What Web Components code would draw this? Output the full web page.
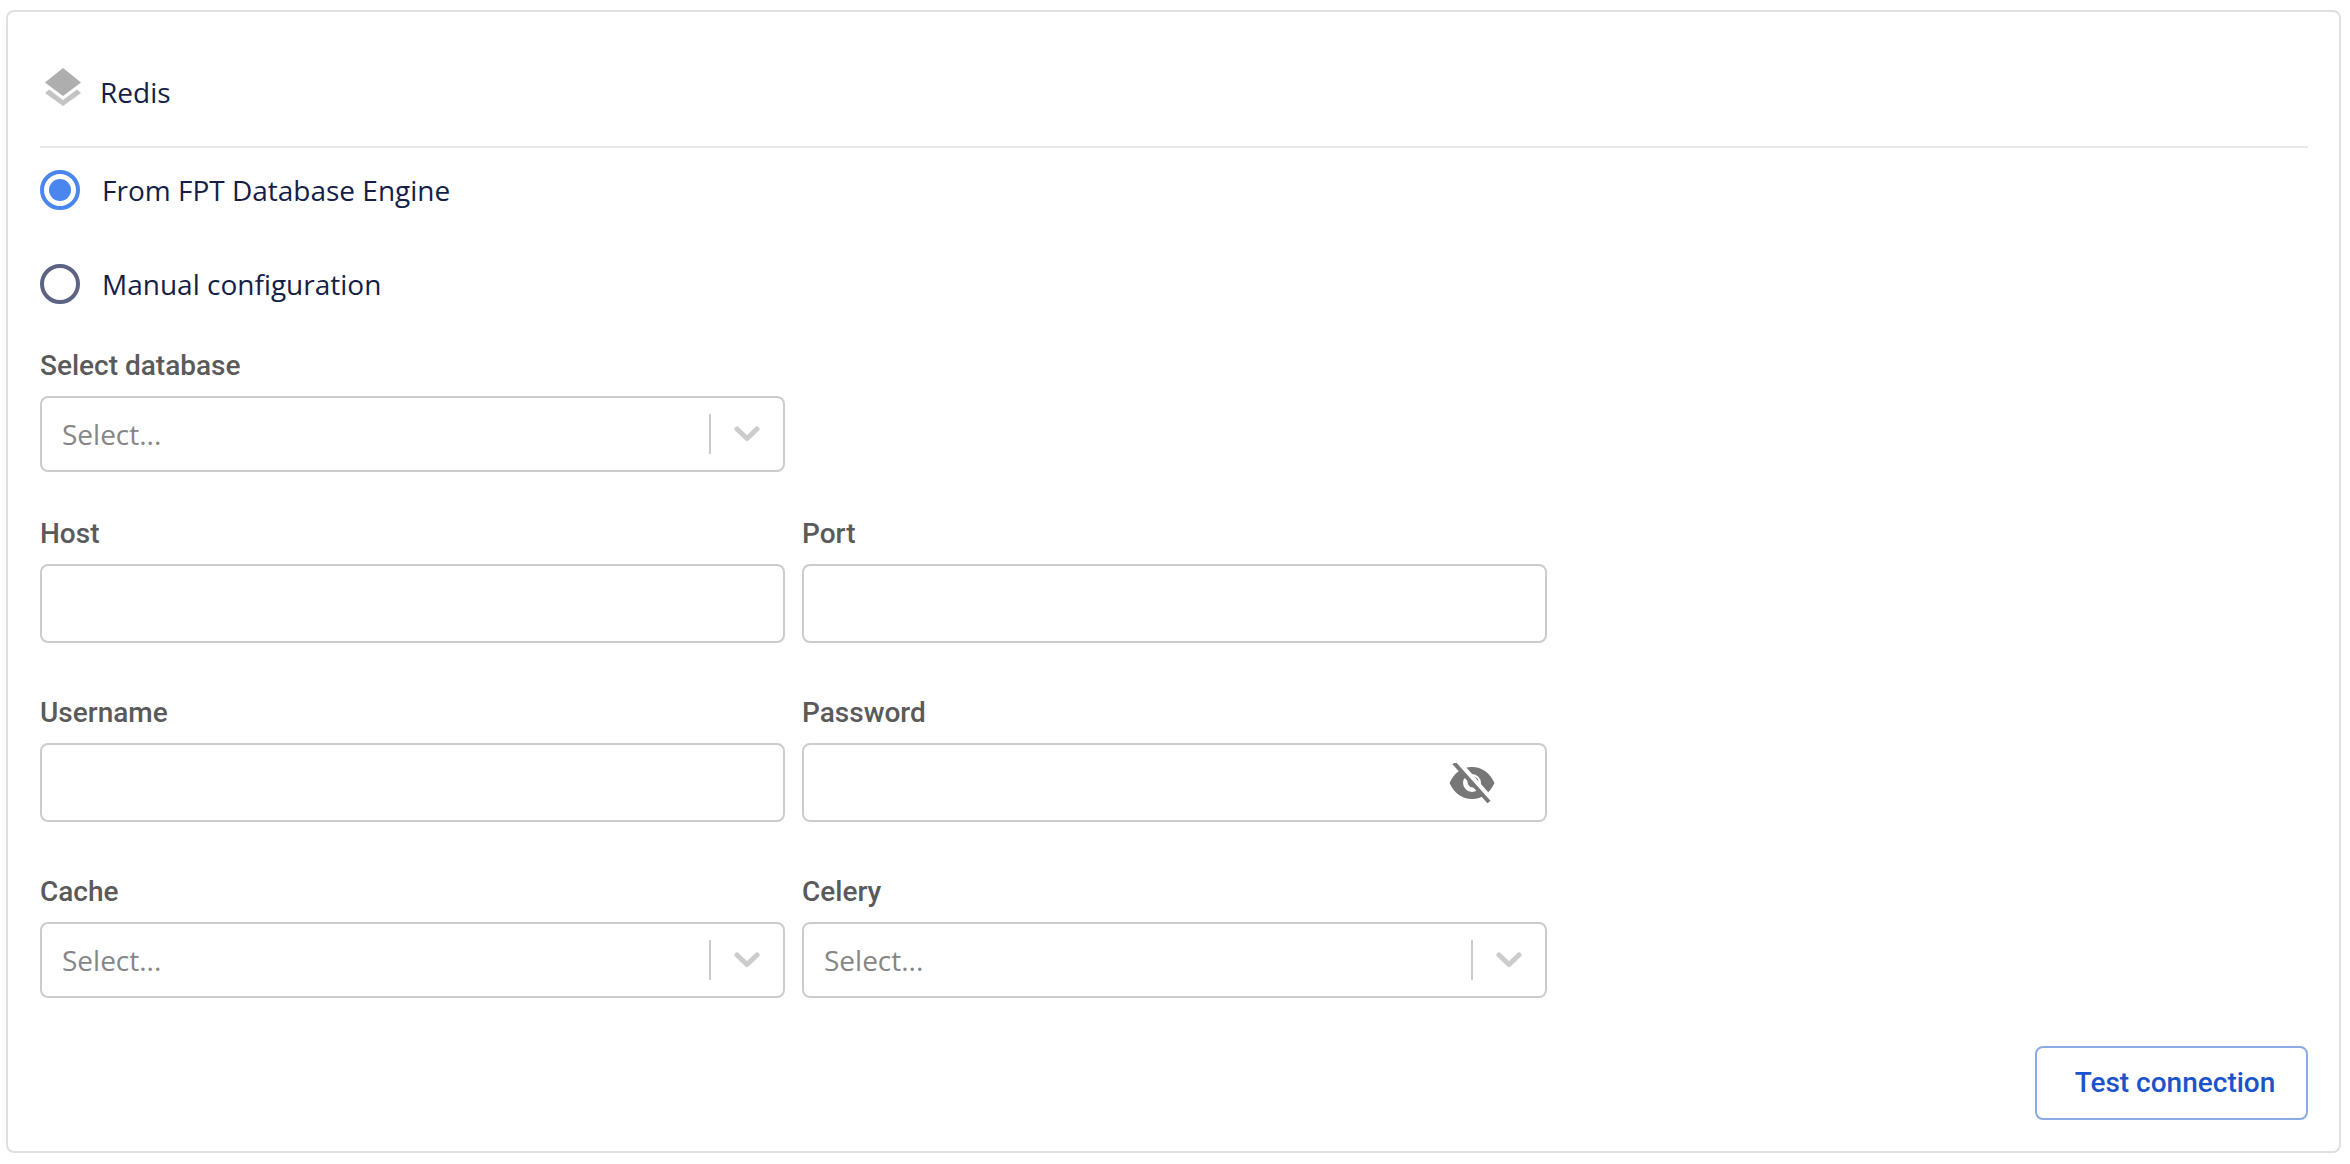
<!DOCTYPE html>
<html>
<head>
<meta charset="utf-8">
<style>
  html, body { margin: 0; padding: 0; background: #fff; }
  body { padding: 10px 9px 11px 6px; }
</style>
</head>
<body>
<config-card title="Redis">
  <radio-option checked>From FPT Database Engine</radio-option>
  <radio-option>Manual configuration</radio-option>
  <form-grid>
    <select-field label="Select database"></select-field>
    <span></span>
    <text-field label="Host"></text-field>
    <text-field label="Port"></text-field>
    <text-field label="Username"></text-field>
    <text-field label="Password" secret></text-field>
    <select-field label="Cache"></select-field>
    <select-field label="Celery"></select-field>
  </form-grid>
  <outline-button>Test connection</outline-button>
</config-card>

<script>
(() => {
  const shadow = (el, html) => {
    el.attachShadow({ mode: 'open' }).innerHTML = html;
  };

  class ConfigCard extends HTMLElement {
    connectedCallback() {
      shadow(this, `
        <style>
          :host {
            display: block;
            height: 1143px;
            box-sizing: border-box;
            border: 2px solid #e0e0e0;
            border-radius: 8px;
            padding: 0 31px 0 32px;
            background: #fff;
          }
          .head {
            display: flex;
            align-items: center;
            height: 136px;
            box-sizing: border-box;
            padding: 26px 0 0 5px;
            border-bottom: 2px solid #e8e8e8;
            font: 400 28px "Open Sans", sans-serif;
            color: #141e46;
          }
          svg { width: 36px; height: 38px; margin: 0 19px 10px 0; }
        </style>
        <div class="head">
          <svg viewBox="0 0 36 38">
            <path fill="#aeaeae" d="M18 0 L36 14.5 L18 28 L0 14.5 Z"/>
            <path fill="#c4c4c4" d="M0 25 L4 21.5 L18 32 L32 21.5 L36 25 L18 38 Z"/>
          </svg>
          <span>${this.getAttribute('title')}</span>
        </div>
        <slot></slot>
      `);
    }
  }

  class RadioOption extends HTMLElement {
    connectedCallback() {
      const on = this.hasAttribute('checked');
      shadow(this, `
        <style>
          :host {
            display: flex;
            align-items: center;
            height: 94px;
            font: 400 28px "Open Sans", sans-serif;
            color: #141e46;
          }
          :host(:first-child) { margin-top: -5px; }
          .dot {
            width: 40px;
            height: 40px;
            box-sizing: border-box;
            border-radius: 50%;
            border: 4px solid ${on ? '#4a86ed' : '#5c6484'};
            margin-right: 22px;
            display: flex;
            align-items: center;
            justify-content: center;
          }
          .dot i {
            display: ${on ? 'block' : 'none'};
            width: 22px;
            height: 22px;
            border-radius: 50%;
            background: #4a86ed;
          }
        </style>
        <span class="dot"><i></i></span>
        <slot></slot>
      `);
    }
  }

  class FormGrid extends HTMLElement {
    connectedCallback() {
      shadow(this, `
        <style>
          :host {
            display: grid;
            grid-template-columns: 745px 745px;
            column-gap: 17px;
            margin-top: 14px;
          }
        </style>
        <slot></slot>
      `);
    }
  }

  const fieldCss = `
    :host { display: block; padding-bottom: 49px; }
    label {
      display: block;
      padding-top: 1px;
      margin-bottom: 10px;
      font: 500 28px/40px Roboto, sans-serif;
      color: #5a5a5a;
    }
    .box {
      display: flex;
      align-items: center;
      box-sizing: border-box;
      border: 2px solid #ccc;
      border-radius: 8px;
      background: #fff;
    }
  `;

  class TextField extends HTMLElement {
    connectedCallback() {
      const eye = this.hasAttribute('secret') ? `
        <svg viewBox="0 0 46 40" width="46" height="40">
          <path fill="#777" fill-rule="evenodd" d="M23 4 C33 4 41 10 45.5 20 C41 30 33 36 23 36 C13 36 5 30 .5 20 C5 10 13 4 23 4 Z M23 11 A9 9 0 1 0 23 29 A9 9 0 1 0 23 11 Z"/>
          <circle cx="24" cy="19" r="5.5" fill="#777"/>
          <path stroke="#fff" stroke-width="7" d="M7 -2 L44 40"/>
          <path stroke="#777" stroke-width="4" d="M5 0 L40 39"/>
        </svg>` : '';
      shadow(this, `
        <style>
          ${fieldCss}
          .box { height: 79px; justify-content: flex-end; padding-right: 50px; }
        </style>
        <label>${this.getAttribute('label')}</label>
        <div class="box">${eye}</div>
      `);
    }
  }

  class SelectField extends HTMLElement {
    connectedCallback() {
      shadow(this, `
        <style>
          ${fieldCss}
          :host { padding-bottom: 41px; }
          .box { height: 76px; padding: 0 23px 0 20px; }
          .ph {
            flex: 1;
            font: 400 28px "Open Sans", sans-serif;
            color: #868686;
          }
          .sep { width: 2px; height: 40px; background: #ccc; margin-right: 23px; }
          svg { width: 26px; height: 16px; }
        </style>
        <label>${this.getAttribute('label')}</label>
        <div class="box">
          <span class="ph">Select...</span>
          <span class="sep"></span>
          <svg viewBox="0 0 26 16"><path fill="none" stroke="#ccc" stroke-width="5" stroke-linecap="round" stroke-linejoin="round" d="M3 3 L13 12.5 L23 3"/></svg>
        </div>
      `);
    }
  }

  class OutlineButton extends HTMLElement {
    connectedCallback() {
      shadow(this, `
        <style>
          :host {
            display: flex;
            justify-content: flex-end;
            margin-top: 7px;
          }
          button {
            width: 273px;
            height: 74px;
            padding: 0 0 2px 7px;
            box-sizing: border-box;
            background: #fff;
            border: 2px solid #8aabe6;
            border-radius: 8px;
            color: #1b54c9;
            font: 500 28px Roboto, sans-serif;
          }
        </style>
        <button><slot></slot></button>
      `);
    }
  }

  customElements.define('config-card', ConfigCard);
  customElements.define('radio-option', RadioOption);
  customElements.define('form-grid', FormGrid);
  customElements.define('text-field', TextField);
  customElements.define('select-field', SelectField);
  customElements.define('outline-button', OutlineButton);
})();
</script>
</body>
</html>
